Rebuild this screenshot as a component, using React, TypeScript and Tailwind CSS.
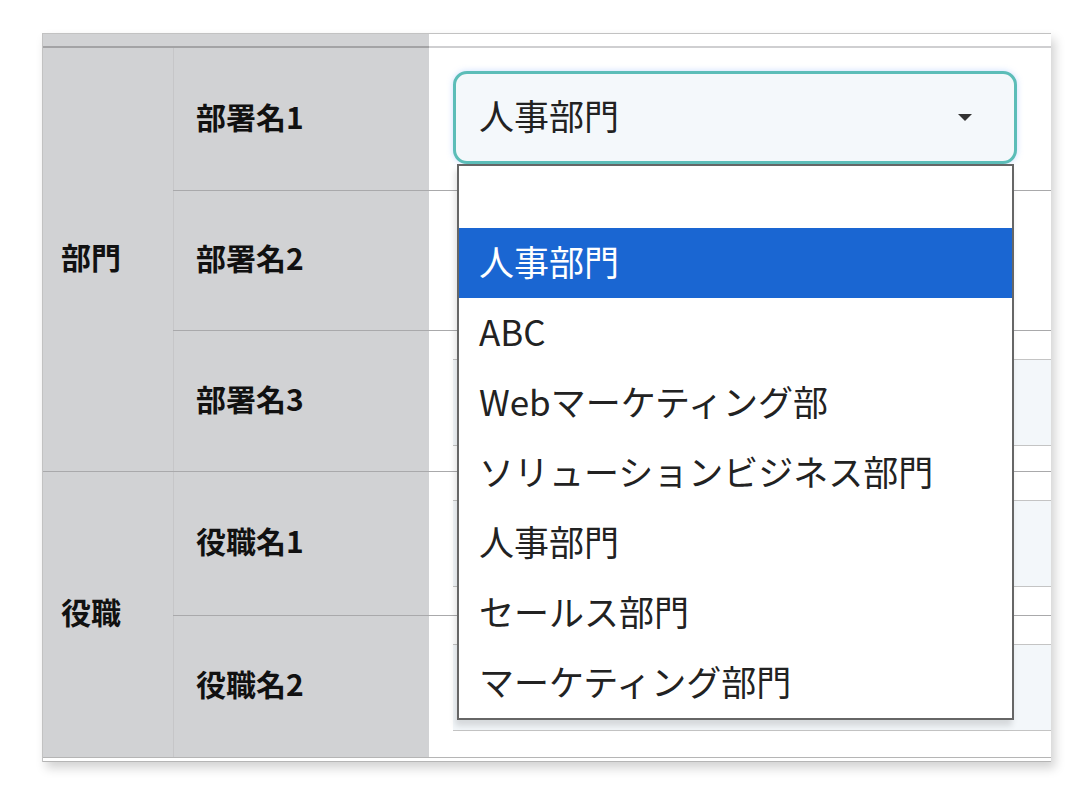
const jp = { fontFamily: '"Noto Sans CJK JP", "Noto Sans", sans-serif' };

const options = [
  "",
  "人事部門",
  "ABC",
  "Webマーケティング部",
  "ソリューションビジネス部門",
  "人事部門",
  "セールス部門",
  "マーケティング部門",
];

function Caret() {
  return (
    <svg width="14" height="8" viewBox="0 0 14 8" className="shrink-0">
      <polygon points="0,0 14,0 7,7" fill="#333" />
    </svg>
  );
}

function Dropdown() {
  return (
    <div className="absolute left-[28px] top-[116px] z-10 w-[557px] border-2 border-[#666] bg-white shadow-[-2px_6px_6px_rgba(0,0,0,0.12)]">
      {options.map((o, i) => (
        <div
          key={i}
          className={
            (i === 0 ? "h-[62px] " : "h-[70px] ") +
            (i === 1 ? "bg-[#1a66d2] text-white " : "text-[#222] ") +
            "flex items-center pb-[4px] pl-[20px] text-[35px]"
          }
        >
          {o}
        </div>
      ))}
    </div>
  );
}

function Row({ label, h, first, children }: { label: string; h: string; first?: boolean; children?: React.ReactNode }) {
  return (
    <div className={"flex " + h + (first ? "" : " border-t border-[#a9a9ab]")}>
      <div className="flex w-[256px] items-center border-l border-[#c6c6c8] bg-[#d1d2d4] pb-[6px] pl-[22px] text-[30px] font-bold text-[#111]">
        {label}
      </div>
      <div className="relative flex-1 bg-white">{children}</div>
    </div>
  );
}

function Field() {
  return <div className="ml-[24px] mt-[28px] h-[87px] border-y border-[#c4c4c4] bg-[#f3f7fa]" />;
}

function Group({ label, children }: { label: string; children: React.ReactNode }) {
  return (
    <div className="flex">
      <div className="flex w-[130px] items-center bg-[#d1d2d4] pb-[6px] pl-[18px] text-[30px] font-bold text-[#111]">
        {label}
      </div>
      <div className="flex flex-1 flex-col">{children}</div>
    </div>
  );
}

export default function App() {
  return (
    <div className="min-h-[800px] bg-white pl-[42px] pt-[33px]" style={jp}>
      <div className="w-[1009px] border-l border-t border-[#c2c2c2] bg-white shadow-[4px_6px_10px_rgba(0,0,0,0.18)]">
        <div className="flex h-[14px]">
          <div className="w-[386px] border-b-2 border-[#a3a3a5] bg-[#d1d2d4]" />
          <div className="flex-1 border-b-2 border-[#cfcfd1] bg-white" />
        </div>
        <Group label="部門">
          <Row label="部署名1" h="h-[142px]" first>
            <div className="ml-[24px] mr-[34px] mt-[23px] flex h-[93px] items-center justify-between rounded-[14px] border-[3px] border-[#5cbdb8] bg-[#f4f8fb] pl-[23px] pr-[42px] text-[35px] text-[#222] shadow-[0_0_6px_rgba(110,160,255,0.35)]">
              <span className="-mt-[4px]">人事部門</span>
              <Caret />
            </div>
            <Dropdown />
          </Row>
          <Row label="部署名2" h="h-[140px]" />
          <Row label="部署名3" h="h-[141px]">
            <Field />
          </Row>
        </Group>
        <div className="border-t border-[#a9a9ab]">
          <Group label="役職">
            <Row label="役職名1" h="h-[143px]" first>
              <Field />
            </Row>
            <Row label="役職名2" h="h-[142px]">
              <Field />
            </Row>
          </Group>
        </div>
        <div className="h-[5px] border-y border-[#b5b5b5] bg-white" />
      </div>
    </div>
  );
}
